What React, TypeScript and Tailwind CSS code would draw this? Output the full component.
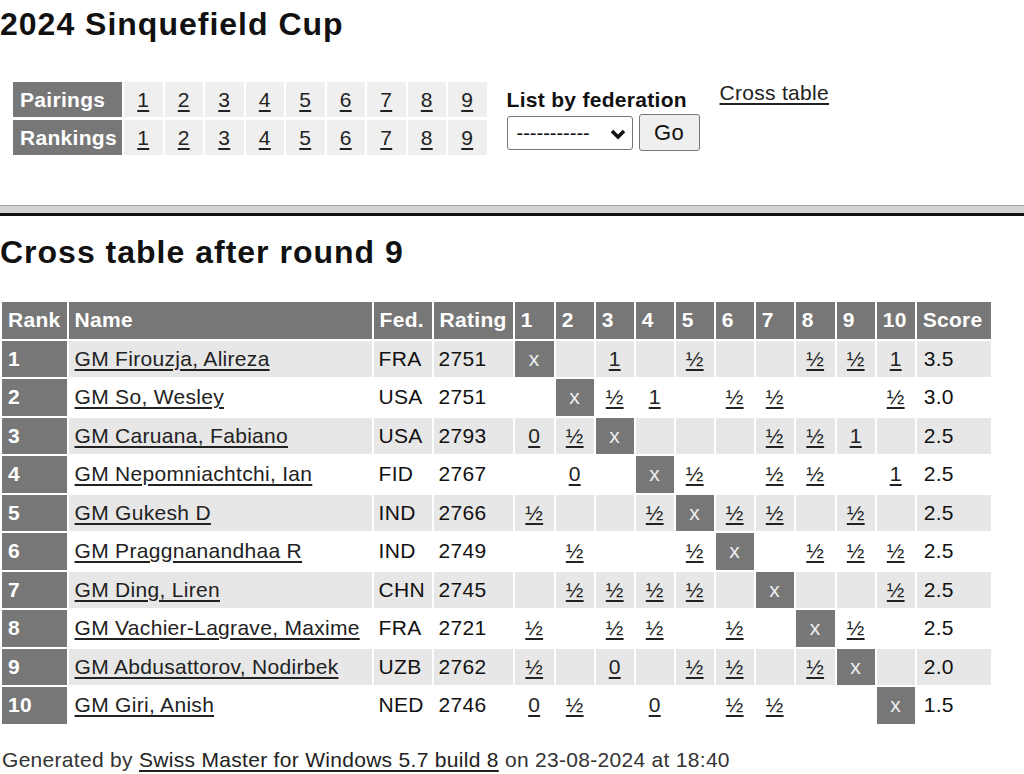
const players = [
  { name: 'GM Firouzja, Alireza', fed: 'FRA', rating: 2751, res: ['x', '', '1', '', '½', '', '', '½', '½', '1'], score: '3.5' },
  { name: 'GM So, Wesley', fed: 'USA', rating: 2751, res: ['', 'x', '½', '1', '', '½', '½', '', '', '½'], score: '3.0' },
  { name: 'GM Caruana, Fabiano', fed: 'USA', rating: 2793, res: ['0', '½', 'x', '', '', '', '½', '½', '1', ''], score: '2.5' },
  { name: 'GM Nepomniachtchi, Ian', fed: 'FID', rating: 2767, res: ['', '0', '', 'x', '½', '', '½', '½', '', '1'], score: '2.5' },
  { name: 'GM Gukesh D', fed: 'IND', rating: 2766, res: ['½', '', '', '½', 'x', '½', '½', '', '½', ''], score: '2.5' },
  { name: 'GM Praggnanandhaa R', fed: 'IND', rating: 2749, res: ['', '½', '', '', '½', 'x', '', '½', '½', '½'], score: '2.5' },
  { name: 'GM Ding, Liren', fed: 'CHN', rating: 2745, res: ['', '½', '½', '½', '½', '', 'x', '', '', '½'], score: '2.5' },
  { name: 'GM Vachier-Lagrave, Maxime', fed: 'FRA', rating: 2721, res: ['½', '', '½', '½', '', '½', '', 'x', '½', ''], score: '2.5' },
  { name: 'GM Abdusattorov, Nodirbek', fed: 'UZB', rating: 2762, res: ['½', '', '0', '', '½', '½', '', '½', 'x', ''], score: '2.0' },
  { name: 'GM Giri, Anish', fed: 'NED', rating: 2746, res: ['0', '½', '', '0', '', '½', '½', '', '', 'x'], score: '1.5' },
];

const roundWidths = ['w-[39px]', 'w-[38px]', 'w-[38px]', 'w-[38px]', 'w-[38px]', 'w-[38px]', 'w-[38px]', 'w-[39px]', 'w-[38px]', 'w-[38px]'];
const rounds = [1, 2, 3, 4, 5, 6, 7, 8, 9];

function NavRow({ label }: { label: string }) {
  return (
    <>
      <div className="h-[35px] bg-[#777] text-white font-bold pl-[7px] flex items-center">{label}</div>
      {rounds.map((r) => (
        <div key={r} className="h-[35px] bg-[#efefef] flex items-center justify-center">
          <a href="#" className="underline underline-offset-[3px] text-[#222]">{r}</a>
        </div>
      ))}
    </>
  );
}

export default function App() {
  const th = 'h-[36.5px] bg-[#777] text-white font-bold text-left px-[6px] p-0';

  return (
    <div className="min-h-[774px] bg-white text-[#111] text-[21px] leading-[24px] tracking-[0.3px] [font-family:'Liberation_Sans',Arial,sans-serif]">
      <h1 className="pt-2 text-[32px] leading-[32px] font-bold tracking-[1px]">2024 Sinquefield Cup</h1>

      <div className="flex items-start mt-[42px] pl-[13px]">
        <div className="grid grid-cols-[109px_repeat(9,38.5px)] gap-x-[2px] gap-y-[3px]">
          <NavRow label="Pairings" />
          <NavRow label="Rankings" />
        </div>

        <div className="ml-[20px] mt-[6px]">
          <div className="font-bold">List by federation</div>
          <div className="flex items-center gap-[6px] mt-[2px]">
            <div className="relative w-[126px] h-[34px] border border-[#767676] rounded-[3px] bg-white flex items-center pl-[9px] text-[20px] tracking-normal">
              <span>-----------</span>
              <svg className="absolute right-[6px] top-[11px]" width="16" height="12" viewBox="0 0 16 12">
                <path d="M2 3 L8 9 L14 3" fill="none" stroke="#111" strokeWidth="3.5" />
              </svg>
            </div>
            <button className="w-[61px] h-[37px] bg-[#efefef] border border-[#767676] rounded-[3px] text-[22px] text-[#111]">Go</button>
          </div>
        </div>

        <a href="#" className="ml-[20px] -mt-[1px] underline underline-offset-[3px] text-[#222]">Cross table</a>
      </div>

      <div className="mt-[50px] h-[11px] border-t border-[#a0a0a0] bg-[#d3d3d3] border-b-[3px] border-b-[#111]"></div>

      <h2 className="mt-[20px] text-[32px] leading-[32px] font-bold tracking-[1px]">Cross table after round 9</h2>

      <table className="mt-[32px] table-fixed border-separate border-spacing-[2px]">
        <thead>
          <tr>
            <th className={`${th} w-[64px]`}>Rank</th>
            <th className={`${th} w-[303px]`}>Name</th>
            <th className={`${th} w-[58px]`}>Fed.</th>
            <th className={`${th} w-[78px]`}>Rating</th>
            {roundWidths.map((w, i) => (
              <th key={i} className={`${th} ${w}`}>{i + 1}</th>
            ))}
            <th className={`${th} w-[74px]`}>Score</th>
          </tr>
        </thead>
        <tbody>
          {players.map((p, i) => {
            const bg = i % 2 === 0 ? 'bg-[#e7e7e7]' : 'bg-white';
            return (
              <tr key={p.name}>
                <td className="h-[36.5px] p-0 px-[6px] bg-[#777] text-white font-bold">{i + 1}</td>
                <td className={`h-[36.5px] p-0 px-[6px] ${bg}`}>
                  <a href="#" className="underline underline-offset-[3px] text-[#222]">{p.name}</a>
                </td>
                <td className={`h-[36.5px] p-0 px-[5px] ${bg}`}>{p.fed}</td>
                <td className={`h-[36.5px] p-0 px-[5px] ${bg}`}>{p.rating}</td>
                {p.res.map((r, j) =>
                  r === 'x' ? (
                    <td key={j} className="h-[36.5px] p-0 text-center bg-[#777] text-[#eee]">x</td>
                  ) : (
                    <td key={j} className={`h-[36.5px] p-0 text-center ${bg}`}>
                      {r && <a href="#" className="underline underline-offset-[3px] text-[#222]">{r}</a>}
                    </td>
                  )
                )}
                <td className={`h-[36.5px] p-0 px-[7px] ${bg}`}>{p.score}</td>
              </tr>
            );
          })}
        </tbody>
      </table>

      <p className="mt-[22px] pl-[2px] text-[#333]">
        Generated by <a href="#" className="underline underline-offset-[3px] text-[#222]">Swiss Master for Windows 5.7 build 8</a> on 23-08-2024 at 18:40
      </p>
    </div>
  );
}
